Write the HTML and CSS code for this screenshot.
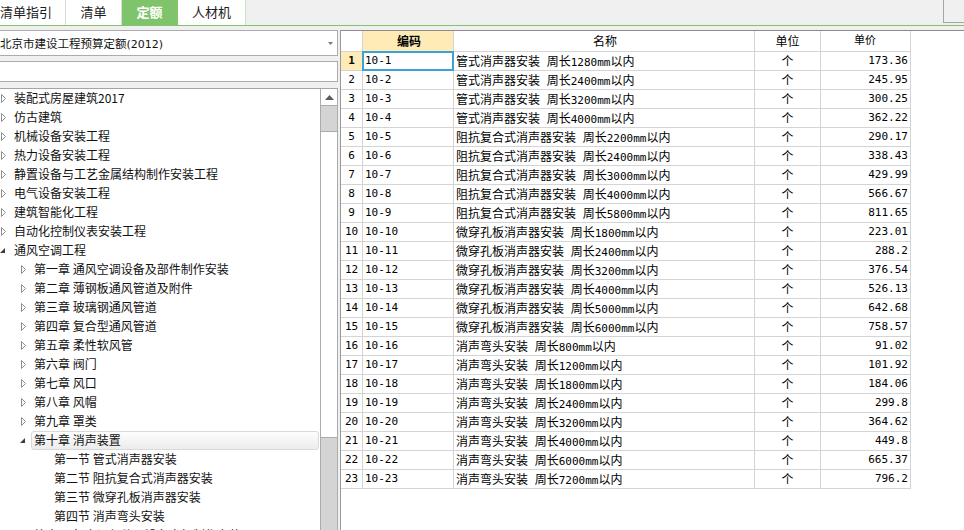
FILE: index.html
```html
<!DOCTYPE html>
<html lang="zh-CN">
<head>
<meta charset="utf-8">
<title>定额</title>
<link rel="stylesheet" href="styles.css">
</head>
<body>
<div class="app">
  <div class="tabbar">
    <div class="tabs">
      <div class="tab t-guide">清单指引</div>
      <div class="tab t-list">清单</div>
      <div class="tab t-quota active">定额</div>
      <div class="tab t-rcj">人材机</div>
    </div>
    <div class="corner"></div>
  </div>

  <div class="main">
    <div class="left">
      <div class="select">
        <span class="select-text">北京市建设工程预算定额<span class="paren">(2012)</span></span>
        <svg class="caret" width="5" height="3" viewBox="0 0 5 3"><path d="M0 0H5L2.5 3Z" fill="#7a7a7a"/></svg>
      </div>
      <div class="search"></div>
      <div class="treebox">
        <div class="tree">
          <div class="row l0"><span class="tw"><svg width="5" height="9" viewBox="0 0 5 9"><path d="M0.5 0.5L4.5 4.5L0.5 8.5Z" fill="#fff" stroke="#8f8f8f"/></svg></span><span class="lbl">装配式房屋建筑2017</span></div>
          <div class="row l0"><span class="tw"><svg width="5" height="9" viewBox="0 0 5 9"><path d="M0.5 0.5L4.5 4.5L0.5 8.5Z" fill="#fff" stroke="#8f8f8f"/></svg></span><span class="lbl">仿古建筑</span></div>
          <div class="row l0"><span class="tw"><svg width="5" height="9" viewBox="0 0 5 9"><path d="M0.5 0.5L4.5 4.5L0.5 8.5Z" fill="#fff" stroke="#8f8f8f"/></svg></span><span class="lbl">机械设备安装工程</span></div>
          <div class="row l0"><span class="tw"><svg width="5" height="9" viewBox="0 0 5 9"><path d="M0.5 0.5L4.5 4.5L0.5 8.5Z" fill="#fff" stroke="#8f8f8f"/></svg></span><span class="lbl">热力设备安装工程</span></div>
          <div class="row l0"><span class="tw"><svg width="5" height="9" viewBox="0 0 5 9"><path d="M0.5 0.5L4.5 4.5L0.5 8.5Z" fill="#fff" stroke="#8f8f8f"/></svg></span><span class="lbl">静置设备与工艺金属结构制作安装工程</span></div>
          <div class="row l0"><span class="tw"><svg width="5" height="9" viewBox="0 0 5 9"><path d="M0.5 0.5L4.5 4.5L0.5 8.5Z" fill="#fff" stroke="#8f8f8f"/></svg></span><span class="lbl">电气设备安装工程</span></div>
          <div class="row l0"><span class="tw"><svg width="5" height="9" viewBox="0 0 5 9"><path d="M0.5 0.5L4.5 4.5L0.5 8.5Z" fill="#fff" stroke="#8f8f8f"/></svg></span><span class="lbl">建筑智能化工程</span></div>
          <div class="row l0"><span class="tw"><svg width="5" height="9" viewBox="0 0 5 9"><path d="M0.5 0.5L4.5 4.5L0.5 8.5Z" fill="#fff" stroke="#8f8f8f"/></svg></span><span class="lbl">自动化控制仪表安装工程</span></div>
          <div class="row l0"><span class="tw exp"><svg width="5" height="5" viewBox="0 0 5 5"><path d="M5 0V5H0Z" fill="#3c3c3c"/></svg></span><span class="lbl">通风空调工程</span></div>
          <div class="row l1"><span class="tw"><svg width="5" height="9" viewBox="0 0 5 9"><path d="M0.5 0.5L4.5 4.5L0.5 8.5Z" fill="#fff" stroke="#8f8f8f"/></svg></span><span class="lbl">第一章 通风空调设备及部件制作安装</span></div>
          <div class="row l1"><span class="tw"><svg width="5" height="9" viewBox="0 0 5 9"><path d="M0.5 0.5L4.5 4.5L0.5 8.5Z" fill="#fff" stroke="#8f8f8f"/></svg></span><span class="lbl">第二章 薄钢板通风管道及附件</span></div>
          <div class="row l1"><span class="tw"><svg width="5" height="9" viewBox="0 0 5 9"><path d="M0.5 0.5L4.5 4.5L0.5 8.5Z" fill="#fff" stroke="#8f8f8f"/></svg></span><span class="lbl">第三章 玻璃钢通风管道</span></div>
          <div class="row l1"><span class="tw"><svg width="5" height="9" viewBox="0 0 5 9"><path d="M0.5 0.5L4.5 4.5L0.5 8.5Z" fill="#fff" stroke="#8f8f8f"/></svg></span><span class="lbl">第四章 复合型通风管道</span></div>
          <div class="row l1"><span class="tw"><svg width="5" height="9" viewBox="0 0 5 9"><path d="M0.5 0.5L4.5 4.5L0.5 8.5Z" fill="#fff" stroke="#8f8f8f"/></svg></span><span class="lbl">第五章 柔性软风管</span></div>
          <div class="row l1"><span class="tw"><svg width="5" height="9" viewBox="0 0 5 9"><path d="M0.5 0.5L4.5 4.5L0.5 8.5Z" fill="#fff" stroke="#8f8f8f"/></svg></span><span class="lbl">第六章 阀门</span></div>
          <div class="row l1"><span class="tw"><svg width="5" height="9" viewBox="0 0 5 9"><path d="M0.5 0.5L4.5 4.5L0.5 8.5Z" fill="#fff" stroke="#8f8f8f"/></svg></span><span class="lbl">第七章 风口</span></div>
          <div class="row l1"><span class="tw"><svg width="5" height="9" viewBox="0 0 5 9"><path d="M0.5 0.5L4.5 4.5L0.5 8.5Z" fill="#fff" stroke="#8f8f8f"/></svg></span><span class="lbl">第八章 风帽</span></div>
          <div class="row l1"><span class="tw"><svg width="5" height="9" viewBox="0 0 5 9"><path d="M0.5 0.5L4.5 4.5L0.5 8.5Z" fill="#fff" stroke="#8f8f8f"/></svg></span><span class="lbl">第九章 罩类</span></div>
          <div class="row l1 selected"><span class="tw exp"><svg width="5" height="5" viewBox="0 0 5 5"><path d="M5 0V5H0Z" fill="#3c3c3c"/></svg></span><span class="lbl">第十章 消声装置</span></div>
          <div class="row l2"><span class="tw"></span><span class="lbl">第一节 管式消声器安装</span></div>
          <div class="row l2"><span class="tw"></span><span class="lbl">第二节 阻抗复合式消声器安装</span></div>
          <div class="row l2"><span class="tw"></span><span class="lbl">第三节 微穿孔板消声器安装</span></div>
          <div class="row l2"><span class="tw"></span><span class="lbl">第四节 消声弯头安装</span></div>
          <div class="row l1"><span class="tw"><svg width="5" height="9" viewBox="0 0 5 9"><path d="M0.5 0.5L4.5 4.5L0.5 8.5Z" fill="#fff" stroke="#8f8f8f"/></svg></span><span class="lbl">第十一章 空调部件及设备支架制作安装</span></div>
        </div>
        <div class="vscroll">
          <div class="sb-btn"><svg width="9" height="5" viewBox="0 0 9 5"><path d="M4.5 0L9 5H0Z" fill="#5c5c5c"/></svg></div>
          <div class="sb-gap"></div>
          <div class="sb-thumb"></div>
        </div>
      </div>
    </div>

    <div class="right">
      <div class="grid">
        <div class="gr gh">
          <div class="c cn"></div>
          <div class="c cc hl">编码</div>
          <div class="c cm">名称</div>
          <div class="c cu">单位</div>
          <div class="c cp">单价</div>
        </div>
        <div class="gr"><div class="c cn hl">1</div><div class="c cc sel">10-1</div><div class="c cm">管式消声器安装<span class="n"> </span>周长<span class="n">1280mm</span>以内</div><div class="c cu">个</div><div class="c cp">173.36</div></div>
        <div class="gr"><div class="c cn">2</div><div class="c cc">10-2</div><div class="c cm">管式消声器安装<span class="n"> </span>周长<span class="n">2400mm</span>以内</div><div class="c cu">个</div><div class="c cp">245.95</div></div>
        <div class="gr"><div class="c cn">3</div><div class="c cc">10-3</div><div class="c cm">管式消声器安装<span class="n"> </span>周长<span class="n">3200mm</span>以内</div><div class="c cu">个</div><div class="c cp">300.25</div></div>
        <div class="gr"><div class="c cn">4</div><div class="c cc">10-4</div><div class="c cm">管式消声器安装<span class="n"> </span>周长<span class="n">4000mm</span>以内</div><div class="c cu">个</div><div class="c cp">362.22</div></div>
        <div class="gr"><div class="c cn">5</div><div class="c cc">10-5</div><div class="c cm">阻抗复合式消声器安装<span class="n"> </span>周长<span class="n">2200mm</span>以内</div><div class="c cu">个</div><div class="c cp">290.17</div></div>
        <div class="gr"><div class="c cn">6</div><div class="c cc">10-6</div><div class="c cm">阻抗复合式消声器安装<span class="n"> </span>周长<span class="n">2400mm</span>以内</div><div class="c cu">个</div><div class="c cp">338.43</div></div>
        <div class="gr"><div class="c cn">7</div><div class="c cc">10-7</div><div class="c cm">阻抗复合式消声器安装<span class="n"> </span>周长<span class="n">3000mm</span>以内</div><div class="c cu">个</div><div class="c cp">429.99</div></div>
        <div class="gr"><div class="c cn">8</div><div class="c cc">10-8</div><div class="c cm">阻抗复合式消声器安装<span class="n"> </span>周长<span class="n">4000mm</span>以内</div><div class="c cu">个</div><div class="c cp">566.67</div></div>
        <div class="gr"><div class="c cn">9</div><div class="c cc">10-9</div><div class="c cm">阻抗复合式消声器安装<span class="n"> </span>周长<span class="n">5800mm</span>以内</div><div class="c cu">个</div><div class="c cp">811.65</div></div>
        <div class="gr"><div class="c cn">10</div><div class="c cc">10-10</div><div class="c cm">微穿孔板消声器安装<span class="n"> </span>周长<span class="n">1800mm</span>以内</div><div class="c cu">个</div><div class="c cp">223.01</div></div>
        <div class="gr"><div class="c cn">11</div><div class="c cc">10-11</div><div class="c cm">微穿孔板消声器安装<span class="n"> </span>周长<span class="n">2400mm</span>以内</div><div class="c cu">个</div><div class="c cp">288.2</div></div>
        <div class="gr"><div class="c cn">12</div><div class="c cc">10-12</div><div class="c cm">微穿孔板消声器安装<span class="n"> </span>周长<span class="n">3200mm</span>以内</div><div class="c cu">个</div><div class="c cp">376.54</div></div>
        <div class="gr"><div class="c cn">13</div><div class="c cc">10-13</div><div class="c cm">微穿孔板消声器安装<span class="n"> </span>周长<span class="n">4000mm</span>以内</div><div class="c cu">个</div><div class="c cp">526.13</div></div>
        <div class="gr"><div class="c cn">14</div><div class="c cc">10-14</div><div class="c cm">微穿孔板消声器安装<span class="n"> </span>周长<span class="n">5000mm</span>以内</div><div class="c cu">个</div><div class="c cp">642.68</div></div>
        <div class="gr"><div class="c cn">15</div><div class="c cc">10-15</div><div class="c cm">微穿孔板消声器安装<span class="n"> </span>周长<span class="n">6000mm</span>以内</div><div class="c cu">个</div><div class="c cp">758.57</div></div>
        <div class="gr"><div class="c cn">16</div><div class="c cc">10-16</div><div class="c cm">消声弯头安装<span class="n"> </span>周长<span class="n">800mm</span>以内</div><div class="c cu">个</div><div class="c cp">91.02</div></div>
        <div class="gr"><div class="c cn">17</div><div class="c cc">10-17</div><div class="c cm">消声弯头安装<span class="n"> </span>周长<span class="n">1200mm</span>以内</div><div class="c cu">个</div><div class="c cp">101.92</div></div>
        <div class="gr"><div class="c cn">18</div><div class="c cc">10-18</div><div class="c cm">消声弯头安装<span class="n"> </span>周长<span class="n">1800mm</span>以内</div><div class="c cu">个</div><div class="c cp">184.06</div></div>
        <div class="gr"><div class="c cn">19</div><div class="c cc">10-19</div><div class="c cm">消声弯头安装<span class="n"> </span>周长<span class="n">2400mm</span>以内</div><div class="c cu">个</div><div class="c cp">299.8</div></div>
        <div class="gr"><div class="c cn">20</div><div class="c cc">10-20</div><div class="c cm">消声弯头安装<span class="n"> </span>周长<span class="n">3200mm</span>以内</div><div class="c cu">个</div><div class="c cp">364.62</div></div>
        <div class="gr"><div class="c cn">21</div><div class="c cc">10-21</div><div class="c cm">消声弯头安装<span class="n"> </span>周长<span class="n">4000mm</span>以内</div><div class="c cu">个</div><div class="c cp">449.8</div></div>
        <div class="gr"><div class="c cn">22</div><div class="c cc">10-22</div><div class="c cm">消声弯头安装<span class="n"> </span>周长<span class="n">6000mm</span>以内</div><div class="c cu">个</div><div class="c cp">665.37</div></div>
        <div class="gr"><div class="c cn">23</div><div class="c cc">10-23</div><div class="c cm">消声弯头安装<span class="n"> </span>周长<span class="n">7200mm</span>以内</div><div class="c cu">个</div><div class="c cp">796.2</div></div>
      </div>
    </div>
  </div>
</div>
</body>
</html>
```

FILE: styles.css
```css
* { box-sizing: border-box; margin: 0; padding: 0; }

html, body { width: 964px; height: 530px; overflow: hidden; }

body {
  background: #f0f0f0;
  font-family: "Noto Sans CJK SC", "Noto Sans", sans-serif;
  font-size: 12px;
  color: #000;
}

.app { display: flex; flex-direction: column; height: 530px; }

/* ---------- tab bar ---------- */
.tabbar {
  display: flex;
  height: 26px;
  flex: none;
  border-bottom: 1px solid #7fc36b;
}
.tabs { display: flex; margin-left: -13px; }
.tab {
  height: 25px;
  line-height: 24px;
  text-align: center;
  font-size: 13px;
  color: #1c1c1c;
  background: #fff;
  border-right: 1px solid #d7dcd5;
}
.t-guide { width: 79px; }
.t-list { width: 56px; }
.t-quota { width: 56px; }
.t-rcj { width: 68px; border-right-color: #c9e4c0; }
.tab.active {
  background: #7fc36b;
  color: #fff;
  font-weight: bold;
  border-right-color: #7fc36b;
}
.corner {
  margin-left: auto;
  width: 21px;
  height: 23px;
  border-left: 1px solid #a5a5a5;
  border-bottom: 1px solid #a5a5a5;
}

/* ---------- main ---------- */
.main {
  flex: 1;
  display: flex;
  gap: 2px;
  padding-top: 4px;
  min-height: 0;
}

.left {
  width: 338px;
  flex: none;
  display: flex;
  flex-direction: column;
  min-height: 0;
}

.select {
  margin-left: -6px;
  height: 26px;
  flex: none;
  display: flex;
  align-items: center;
  padding-left: 5px;
  background: #fff;
  border: 1px solid #acacac;
  font-size: 11.5px;
  color: #111;
}
.select-text { white-space: nowrap; }
.paren { font-family: "DejaVu Sans", sans-serif; font-size: 11px; }
.caret { margin-left: auto; margin-right: 4px; flex: none; }

.search {
  margin: 5px 0 0 -6px;
  height: 21px;
  flex: none;
  background: #fff;
  border: 1px solid #acacac;
}

.treebox {
  margin-top: 6px;
  flex: 1;
  min-height: 0;
  display: flex;
  background: #fff;
  border-top: 1px solid #a5a5a5;
}

.tree {
  flex: 1;
  min-width: 0;
  overflow: hidden;
  color: #111;
}
.row {
  display: flex;
  align-items: center;
  height: 19px;
  padding-left: 1px;
}
.row.l1 { padding-left: 21px; }
.row.l2 { padding-left: 41px; }
.tw {
  width: 10px;
  flex: none;
  display: flex;
  align-items: center;
}
.tw svg { display: block; }
.tw.exp { margin-left: -1px; width: 11px; }
.lbl {
  flex: 1;
  height: 19px;
  line-height: 16px;
  padding-left: 2px;
  margin-right: 1px;
  border: 1px solid transparent;
  border-radius: 3px;
  white-space: nowrap;
}
.row.selected .lbl {
  border-color: #d9d9d9;
  background: linear-gradient(#fdfdfd, #ececec);
}

.vscroll {
  width: 18px;
  flex: none;
  display: flex;
  flex-direction: column;
  background: #d4d4d4;
  border-left: 1px solid #ababab;
  border-right: 1px solid #ababab;
}
.sb-btn {
  height: 17px;
  flex: none;
  display: flex;
  align-items: center;
  justify-content: center;
  background: #fff;
  border-bottom: 1px solid #ababab;
}
.sb-gap { height: 25px; flex: none; }
.sb-thumb {
  height: 307px;
  flex: none;
  background: #fff;
  border-top: 1px solid #ababab;
  border-bottom: 1px solid #ababab;
}

/* ---------- grid ---------- */
.right {
  flex: 1;
  background: #fff;
  border-left: 1px solid #999;
  border-top: 1px solid #8c8c8c;
}
.grid { width: 570px; }
.gr { display: flex; height: 19px; }
.gr.gh { height: 21px; }
.c {
  flex: none;
  height: 100%;
  border-right: 1px solid #d4d4d4;
  border-bottom: 1px solid #d4d4d4;
  line-height: 18px;
  white-space: nowrap;
  overflow: hidden;
}
.gh .c { line-height: 20px; text-align: center; overflow: visible; }
.cn { width: 22px; text-align: center; font-family: "DejaVu Sans Mono", monospace; font-size: 11px; }
.cc { width: 91px; padding-left: 2px; font-family: "DejaVu Sans Mono", monospace; font-size: 11px; }
.cm { width: 301px; padding-left: 2px; }
.cu { width: 66px; text-align: center; }
.cp { width: 90px; text-align: right; padding-right: 2px; font-family: "DejaVu Sans Mono", monospace; font-size: 11px; }
.gh .cc { font-family: "Noto Sans CJK SC", sans-serif; font-size: 12px; }
.n { font-family: "DejaVu Sans Mono", monospace; font-size: 11px; }
.hl { background: #feebb6; font-weight: bold; }
.sel { position: relative; overflow: visible; }
.sel::after {
  content: "";
  position: absolute;
  left: -1px;
  top: -1px;
  right: -1px;
  bottom: -1px;
  border: 2px solid #3aa2d6;
}
```
